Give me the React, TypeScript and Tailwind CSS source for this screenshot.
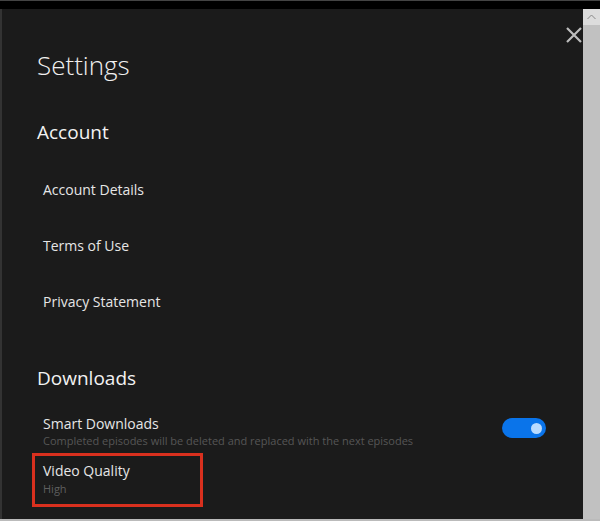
import React from "react";

const font = { fontFamily: '"Open Sans", "Noto Sans", sans-serif' };

const LinkRow = ({ label }: { label: string }) => (
  <div className="h-[56px] flex items-center pl-[41px] text-[14px] text-[#e6e6e6]">{label}</div>
);

export default function App() {
  return (
    <div className="w-[600px] h-[521px] flex flex-col bg-[#1b1b1b] overflow-hidden" style={font}>
      {/* window top strip */}
      <div className="h-[9px] bg-black border-t border-[#444]" />

      <div className="flex flex-1 min-h-0">
        <div className="w-[2px] bg-[#333]" />

        {/* settings pane */}
        <div className="flex-1 relative text-white">
          <button className="absolute top-[18px] right-[1px] w-[16px] h-[16px] flex items-center justify-center text-[#bdbdbd]">
            <svg width="16" height="16" viewBox="0 0 16 16" fill="none" stroke="currentColor" strokeWidth="2.2">
              <path d="M1 1L15 15M15 1L1 15" />
            </svg>
          </button>

          <h1 className="pl-[35px] pt-[38px] text-[26px] font-light leading-[36px] text-[#f0f0f0]">Settings</h1>

          <h2 className="pl-[35px] mt-[35px] text-[19px] leading-[28px] text-[#f2f2f2]">Account</h2>
          <div className="mt-[15px]">
            <LinkRow label="Account Details" />
            <LinkRow label="Terms of Use" />
            <LinkRow label="Privacy Statement" />
          </div>

          <h2 className="pl-[35px] mt-[35px] text-[19px] leading-[28px] text-[#f2f2f2]">Downloads</h2>

          <div className="mt-[22px] flex items-start justify-between pl-[41px] pr-[37px]">
            <div>
              <div className="text-[14px] leading-[20px] text-[#e6e6e6]">Smart Downloads</div>
              <div className="text-[11px] leading-[14px] text-[#565656]">
                Completed episodes will be deleted and replaced with the next episodes
              </div>
            </div>
            <div className="mt-[4px] w-[44px] h-[20px] rounded-full bg-[#0a74ea] flex items-center justify-end pr-[4px]">
              <div className="w-[11px] h-[11px] rounded-full bg-[#b9dbff]" />
            </div>
          </div>

          <div className="mt-[5px] ml-[30px] w-[171px] h-[54px] border-[3px] border-[#d9301e] pl-[8px] pt-[5px]">
            <div className="text-[14px] leading-[20px] text-[#e6e6e6]">Video Quality</div>
            <div className="text-[11px] leading-[16px] text-[#5f5f5f]">High</div>
          </div>
        </div>

        {/* scrollbar */}
        <div className="w-[17px] bg-[#c1c1c1] flex flex-col">
          <div className="h-[16px] bg-[#dcdcdc] flex items-center justify-center text-[#888]">
            <svg width="9" height="6" viewBox="0 0 9 6" fill="none" stroke="currentColor" strokeWidth="1">
              <path d="M0.5 5L4.5 1L8.5 5" />
            </svg>
          </div>
        </div>
      </div>

      <div className="h-[2px] bg-[#bbbbbb]" />
    </div>
  );
}
